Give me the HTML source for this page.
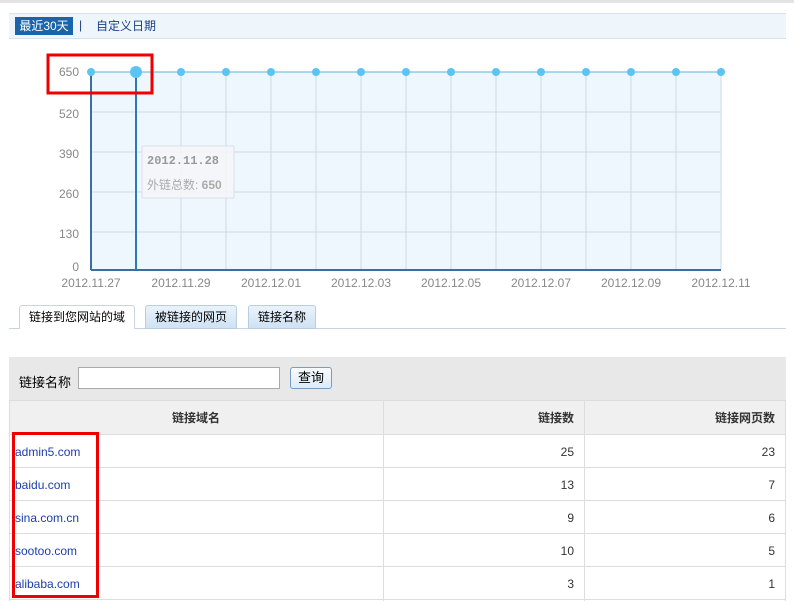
<!DOCTYPE html>
<html><head><meta charset="utf-8"><style>
body{margin:0;width:794px;height:601px;background:#fff;font-family:"Liberation Sans","Noto Sans CJK SC",sans-serif;font-size:12px;position:relative;overflow:hidden}
.a{position:absolute}
</style></head><body>
<div class="a" style="left:0;top:0;width:794px;height:3px;background:#e4e4e4"></div>
<div class="a" style="left:9px;top:13px;width:777px;height:24px;background:#eef5fb;border-top:1px solid #d6e3ef;border-bottom:1px solid #d6e3ef"></div>
<div class="a" style="left:15px;top:17px;width:58px;height:18px;background:#1a64ac;color:#fff;line-height:18px;text-align:center">最近30天</div>
<div class="a" style="left:79px;top:18px;color:#1a3f8a">|</div>
<div class="a" style="left:96px;top:17px;color:#1a3f8a">自定义日期</div>
<svg class="a" style="left:0;top:40px" width="794" height="260">
<rect x="91" y="32" width="630" height="198" fill="#eef7fd"/>
<g stroke="#cdd8e2" stroke-width="1">
<line x1="91" y1="72" x2="721" y2="72"/><line x1="91" y1="112" x2="721" y2="112"/><line x1="91" y1="152" x2="721" y2="152"/><line x1="91" y1="192" x2="721" y2="192"/>
<line x1="181" y1="32" x2="181" y2="230"/><line x1="226" y1="32" x2="226" y2="230"/><line x1="271" y1="32" x2="271" y2="230"/><line x1="316" y1="32" x2="316" y2="230"/><line x1="361" y1="32" x2="361" y2="230"/><line x1="406" y1="32" x2="406" y2="230"/><line x1="451" y1="32" x2="451" y2="230"/><line x1="496" y1="32" x2="496" y2="230"/><line x1="541" y1="32" x2="541" y2="230"/><line x1="586" y1="32" x2="586" y2="230"/><line x1="631" y1="32" x2="631" y2="230"/><line x1="676" y1="32" x2="676" y2="230"/><line x1="721" y1="32" x2="721" y2="230"/>
</g>
<line x1="91" y1="230" x2="721" y2="230" stroke="#3a6ea5" stroke-width="2"/>
<line x1="91" y1="32" x2="91" y2="230" stroke="#3a6ea5" stroke-width="2"/>
<line x1="136" y1="32" x2="136" y2="230" stroke="#2a7ab8" stroke-width="2"/>
<line x1="91" y1="32" x2="721" y2="32" stroke="#5ab3e0" stroke-width="1"/>
<g fill="#5cc4f2"><circle cx="91" cy="32" r="4"/><circle cx="136" cy="32" r="6"/><circle cx="181" cy="32" r="4"/><circle cx="226" cy="32" r="4"/><circle cx="271" cy="32" r="4"/><circle cx="316" cy="32" r="4"/><circle cx="361" cy="32" r="4"/><circle cx="406" cy="32" r="4"/><circle cx="451" cy="32" r="4"/><circle cx="496" cy="32" r="4"/><circle cx="541" cy="32" r="4"/><circle cx="586" cy="32" r="4"/><circle cx="631" cy="32" r="4"/><circle cx="676" cy="32" r="4"/><circle cx="721" cy="32" r="4"/></g>
<g fill="#888" font-size="12" text-anchor="end" font-family="Liberation Sans,sans-serif"><text x="79" y="36">650</text><text x="79" y="78">520</text><text x="79" y="118">390</text><text x="79" y="158">260</text><text x="79" y="198">130</text><text x="79" y="231">0</text></g>
<g fill="#888" font-size="12" text-anchor="middle" font-family="Liberation Sans,sans-serif"><text x="91" y="247">2012.11.27</text><text x="181" y="247">2012.11.29</text><text x="271" y="247">2012.12.01</text><text x="361" y="247">2012.12.03</text><text x="451" y="247">2012.12.05</text><text x="541" y="247">2012.12.07</text><text x="631" y="247">2012.12.09</text><text x="721" y="247">2012.12.11</text></g>
<rect x="142" y="106" width="92" height="52" fill="#f4f6f8" fill-opacity="0.85" stroke="#dde" />
<text x="147" y="124" fill="#999" font-weight="bold" font-size="12" font-family="Liberation Mono,monospace">2012.11.28</text>
<text x="147" y="149" fill="#aaa" font-size="12" font-family="Liberation Sans,Noto Sans CJK SC,sans-serif">外链总数: <tspan font-weight="bold">650</tspan></text>
<rect x="48" y="15" width="104" height="38" fill="none" stroke="#e00" stroke-width="3"/>
</svg>
<div class="a" style="left:9px;top:328px;width:777px;height:1px;background:#c8d4e0"></div>
<div class="a" style="left:19px;top:305px;width:114px;height:23px;background:#fff;border:1px solid #c8d4e0;border-bottom:none;border-radius:3px 3px 0 0;line-height:22px;text-align:center">链接到您网站的域</div>
<div class="a" style="left:145px;top:305px;width:90px;height:22px;background:linear-gradient(#eaf3fb,#cfe2f3);border:1px solid #b8cde0;border-radius:3px 3px 0 0;line-height:22px;text-align:center">被链接的网页</div>
<div class="a" style="left:248px;top:305px;width:66px;height:22px;background:linear-gradient(#eaf3fb,#cfe2f3);border:1px solid #b8cde0;border-radius:3px 3px 0 0;line-height:22px;text-align:center">链接名称</div>
<div class="a" style="left:9px;top:357px;width:777px;height:43px;background:#e8e8e8"></div>
<div class="a" style="left:19px;top:372px;font-size:13px">链接名称</div>
<div class="a" style="left:78px;top:367px;width:200px;height:20px;background:#fff;border:1px solid #aaa"></div>
<div class="a" style="left:290px;top:367px;width:40px;height:20px;background:linear-gradient(#f8fbff,#dfeaf5);border:1px solid #7a9cc0;border-radius:3px;text-align:center;line-height:20px;font-size:13px">查询</div>
<div class="a" style="left:9px;top:400px;width:776px;height:33px;background:#f0f0f0;border-top:1px solid #ddd;border-bottom:1px solid #ddd"></div>
<div class="a" style="left:383px;top:400px;width:1px;height:201px;background:#ddd"></div>
<div class="a" style="left:584px;top:400px;width:1px;height:201px;background:#ddd"></div>
<div class="a" style="left:785px;top:400px;width:1px;height:201px;background:#ddd"></div>
<div class="a" style="left:9px;top:400px;width:1px;height:201px;background:#ddd"></div>
<div class="a" style="left:9px;top:409px;width:374px;text-align:center;font-weight:bold;color:#333">链接域名</div>
<div class="a" style="left:384px;top:409px;width:190px;text-align:right;font-weight:bold;color:#333">链接数</div>
<div class="a" style="left:585px;top:409px;width:190px;text-align:right;font-weight:bold;color:#333">链接网页数</div>
<div class="a" style="left:9px;top:467px;width:776px;height:1px;background:#ddd"></div>
<div class="a" style="left:9px;top:500px;width:776px;height:1px;background:#ddd"></div>
<div class="a" style="left:9px;top:533px;width:776px;height:1px;background:#ddd"></div>
<div class="a" style="left:9px;top:566px;width:776px;height:1px;background:#ddd"></div>
<div class="a" style="left:9px;top:599px;width:776px;height:1px;background:#ddd"></div>
<div class="a" style="left:15px;color:#1a3fa8;line-height:33px;top:436px">admin5.com<br>baidu.com<br>sina.com.cn<br>sootoo.com<br>alibaba.com</div>
<div class="a" style="left:384px;top:436px;width:190px;text-align:right;line-height:33px;color:#333">25<br>13<br>9<br>10<br>3</div>
<div class="a" style="left:585px;top:436px;width:190px;text-align:right;line-height:33px;color:#333">23<br>7<br>6<br>5<br>1</div>
<div class="a" style="left:12px;top:432px;width:81px;height:160px;border:3px solid #e00"></div>
</body></html>
